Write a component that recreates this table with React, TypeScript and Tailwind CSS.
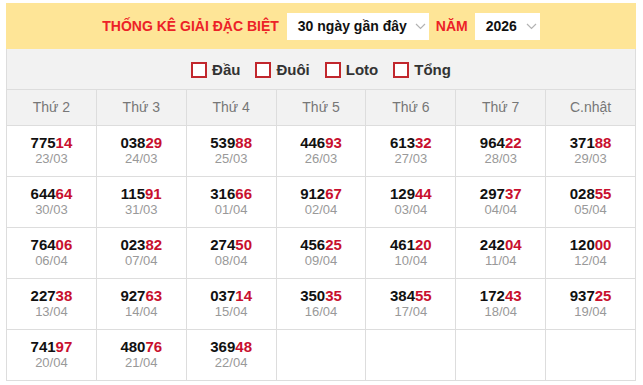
import { ReactNode } from "react";

const days = ["Thứ 2", "Thứ 3", "Thứ 4", "Thứ 5", "Thứ 6", "Thứ 7", "C.nhật"];

const results: [string, string][] = [
  ["77514", "23/03"], ["03829", "24/03"], ["53988", "25/03"], ["44693", "26/03"], ["61332", "27/03"], ["96422", "28/03"], ["37188", "29/03"],
  ["64464", "30/03"], ["11591", "31/03"], ["31666", "01/04"], ["91267", "02/04"], ["12944", "03/04"], ["29737", "04/04"], ["02855", "05/04"],
  ["76406", "06/04"], ["02382", "07/04"], ["27450", "08/04"], ["45625", "09/04"], ["46120", "10/04"], ["24204", "11/04"], ["12000", "12/04"],
  ["22738", "13/04"], ["92763", "14/04"], ["03714", "15/04"], ["35035", "16/04"], ["38455", "17/04"], ["17243", "18/04"], ["93725", "19/04"],
  ["74197", "20/04"], ["48076", "21/04"], ["36948", "22/04"],
];

function Chevron() {
  return (
    <svg width="11" height="7" viewBox="0 0 11 7">
      <path d="M1 1l4.5 4.5L10 1" fill="none" stroke="#b3b3b3" strokeWidth="1.2" />
    </svg>
  );
}

function Select({ children, className }: { children: ReactNode; className: string }) {
  return (
    <div className={`h-[27px] bg-white flex items-center justify-between pl-[11px] pr-[3px] text-[14px] font-bold text-[#111] whitespace-nowrap ${className}`}>
      <span>{children}</span>
      <Chevron />
    </div>
  );
}

function Check({ label }: { label: string }) {
  return (
    <label className="flex items-center gap-[5px]">
      <span className="w-[16px] h-[16px] border-2 border-[#c1272d] bg-white" />
      <span className="text-[15px] font-bold text-[#333]">{label}</span>
    </label>
  );
}

export default function App() {
  const cells = [...results, ...Array(4).fill(null)] as ([string, string] | null)[];
  return (
    <div className="bg-white w-[643px] h-[385px] pt-[3px] pl-[6px]" style={{ fontFamily: '"Liberation Sans", Arial, sans-serif' }}>
      <div className="w-[630px]">
        <header className="h-[46px] bg-[#fee597] flex items-center justify-center">
          <h1 className="text-[14px] font-bold text-[#ec2227] mr-[8px]">THỐNG KÊ GIẢI ĐẶC BIỆT</h1>
          <Select className="w-[142px]">30 ngày gần đây</Select>
          <span className="text-[14px] font-bold text-[#ec2227] mx-[7px]">NĂM</span>
          <Select className="w-[65px]">2026</Select>
        </header>
        <div className="h-[40px] bg-[#f2f2f2] border-x border-[#dddddd] flex items-center justify-center gap-[15px] pt-[2px]">
          <Check label="Đầu" />
          <Check label="Đuôi" />
          <Check label="Loto" />
          <Check label="Tổng" />
        </div>
        <div className="grid grid-cols-7 border-l border-t border-[#dddddd]">
          {days.map((d) => (
            <div key={d} className="h-[36px] bg-[#f2f2f2] border-r border-b border-[#dddddd] flex items-center justify-center text-[14px] text-[#777]">
              {d}
            </div>
          ))}
          {cells.map((c, i) => (
            <div key={i} className="h-[51px] border-r border-b border-[#dddddd] flex flex-col items-center justify-center pb-[2px]">
              {c && (
                <>
                  <div className="text-[15px] font-bold leading-[17px] text-[#111]">
                    {c[0].slice(0, 3)}
                    <span className="text-[#c8102e]">{c[0].slice(3)}</span>
                  </div>
                  <div className="text-[13px] leading-[15px] text-[#999]">{c[1]}</div>
                </>
              )}
            </div>
          ))}
        </div>
      </div>
    </div>
  );
}
